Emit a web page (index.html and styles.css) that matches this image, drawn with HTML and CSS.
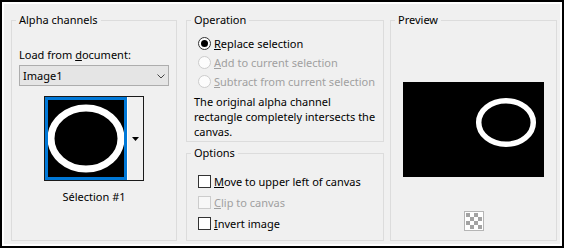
FILE: index.html
```html
<!DOCTYPE html>
<html lang="en">
<head>
  <meta charset="UTF-8">
  <title>Load Selection From Alpha Channel</title>
  <link rel="stylesheet" href="styles.css">
</head>
<body>
  <div class="dialog">
    <!-- 左欄：Alpha channels -->
    <fieldset class="group alpha">
      <legend>Alpha channels</legend>
      <label class="field-label">Load from <u>d</u>ocument:</label>
      <div class="combo">
        <span>Image1</span>
        <svg width="8" height="5" viewBox="0 0 8 5"><polyline points="0.5,0.5 4,4 7.5,0.5" fill="none" stroke="#444" stroke-width="1"/></svg>
      </div>
      <div class="thumb">
        <div class="thumb-image">
          <svg width="76" height="77" viewBox="0 0 76 77"><ellipse cx="38" cy="38.5" rx="35" ry="30.5" fill="none" stroke="#fff" stroke-width="7"/></svg>
        </div>
        <div class="thumb-drop">
          <svg width="7" height="4" viewBox="0 0 7 4"><polygon points="0,0 7,0 3.5,4" fill="#000"/></svg>
        </div>
      </div>
      <div class="thumb-caption">Sélection #1</div>
    </fieldset>

    <!-- 中欄 -->
    <div class="middle">
      <fieldset class="group operation">
        <legend>Operation</legend>
        <div class="choices">
          <div class="choice"><span class="radio checked"></span><span><u>R</u>eplace selection</span></div>
          <div class="choice disabled"><span class="radio"></span><span><u>A</u>dd to current selection</span></div>
          <div class="choice disabled"><span class="radio"></span><span><u>S</u>ubtract from current selection</span></div>
        </div>
        <p class="note">The original alpha channel<br>rectangle completely intersects the<br>canvas.</p>
      </fieldset>
      <fieldset class="group options">
        <legend>Options</legend>
        <div class="checks">
          <div class="choice check-row"><span class="check"></span><span><u>M</u>ove to upper left of canvas</span></div>
          <div class="choice check-row disabled"><span class="check"></span><span><u>C</u>lip to canvas</span></div>
          <div class="choice check-row"><span class="check"></span><span><u>I</u>nvert image</span></div>
        </div>
      </fieldset>
    </div>

    <!-- 右欄：Preview -->
    <fieldset class="group preview">
      <legend>Preview</legend>
      <div class="preview-box">
        <svg width="141" height="95" viewBox="0 0 141 95"><ellipse cx="103" cy="40.5" rx="27.3" ry="21.8" fill="none" stroke="#fff" stroke-width="5.5"/></svg>
      </div>
      <div class="checker">
        <svg width="16" height="16" viewBox="0 0 16 16">
          <rect width="16" height="16" fill="#fff"/>
          <rect x="0" y="0" width="4" height="4" fill="#a3a3a3"/>
          <rect x="8" y="0" width="4" height="4" fill="#a3a3a3"/>
          <rect x="4" y="4" width="4" height="4" fill="#a3a3a3"/>
          <rect x="12" y="4" width="4" height="4" fill="#a3a3a3"/>
          <rect x="0" y="8" width="4" height="4" fill="#a3a3a3"/>
          <rect x="8" y="8" width="4" height="4" fill="#a3a3a3"/>
          <rect x="4" y="12" width="4" height="4" fill="#a3a3a3"/>
          <rect x="12" y="12" width="4" height="4" fill="#a3a3a3"/>
        </svg>
      </div>
    </fieldset>
  </div>
</body>
</html>
```

FILE: styles.css
```css
/* 全局樣式 */
* {
  box-sizing: border-box;
}
body {
  margin: 0;
  background: #fff;
  font-family: "Noto Sans", "Liberation Sans", sans-serif;
  font-size: 11px;
  line-height: 16px;
  color: #000;
}
.dialog {
  width: 564px;
  height: 248px;
  display: flex;
  align-items: flex-start;
  padding: 10px 5px 5px 9px;
  background: #f0f0f0;
  border: 2px solid #000;
  box-shadow: inset 2px 2px 0 #fff, inset -2px -2px 0 #fff;
}
/* 群組框 */
.group {
  margin: 0;
  padding: 0 7px;
  border: 1px solid #dcdcdc;
  min-width: 0;
}
.group legend {
  padding: 0 3px;
  margin-left: -3px;
}
.alpha {
  width: 166px;
  height: 229px;
}
.field-label {
  display: block;
  margin-top: 19px;
}
.combo {
  margin-top: 2px;
  height: 21px;
  display: flex;
  align-items: center;
  justify-content: space-between;
  padding: 0 3px 0 3px;
  background: #e5e5e5;
  border: 1px solid #adadad;
}
.combo svg {
  margin-top: 1px;
}
.thumb {
  width: 100px;
  height: 85px;
  margin: 10px auto 0;
  display: flex;
  border: 1px solid #1a1a1a;
}
.thumb-image {
  width: 82px;
  background: #000;
  border: 3px solid #0078d7;
  overflow: hidden;
}
.thumb-image svg {
  display: block;
}
.thumb-drop {
  flex: 1;
  display: flex;
  align-items: center;
  justify-content: center;
  background: #f0f0f0;
  border-left: 1px solid #fff;
}
.thumb-caption {
  margin-top: 8px;
  text-align: center;
}
/* 中欄 */
.middle {
  width: 198px;
  margin-left: 9px;
  display: flex;
  flex-direction: column;
  gap: 3px;
}
.operation {
  height: 130px;
}
.options {
  height: 96px;
}
.choices {
  padding-top: 6px;
}
.choice {
  display: flex;
  align-items: center;
  height: 19px;
  padding-left: 4px;
  white-space: nowrap;
}
.choice .radio,
.choice .check {
  flex: none;
  margin-right: 3px;
}
.choice.disabled {
  color: #a0a0a0;
}
.radio {
  width: 13px;
  height: 13px;
  border: 1px solid #333;
  border-radius: 50%;
  background: #fff;
  display: flex;
  align-items: center;
  justify-content: center;
}
.radio.checked::after {
  content: "";
  width: 7px;
  height: 7px;
  border-radius: 50%;
  background: #000;
}
.disabled .radio {
  border-color: #cccccc;
  background: #fcfcfc;
}
.note {
  margin: 3px 0 0;
  line-height: 15px;
  white-space: nowrap;
}
.checks {
  padding-top: 10px;
}
.check-row {
  height: 21px;
}
.check {
  width: 13px;
  height: 13px;
  border: 1px solid #333;
  background: #fff;
}
.disabled .check {
  border-color: #cccccc;
  background: #f7f7f7;
}
/* 右欄：預覽 */
.preview {
  width: 167px;
  height: 229px;
  margin-left: 6px;
}
.preview-box {
  width: 141px;
  height: 95px;
  margin: 54px auto 0;
  background: #000;
}
.preview-box svg {
  display: block;
}
.checker {
  width: 20px;
  height: 20px;
  margin: 34px auto 0;
  padding: 1px;
  border: 1px solid #b5b5b5;
  background: #fff;
}
.checker svg {
  display: block;
}
```
